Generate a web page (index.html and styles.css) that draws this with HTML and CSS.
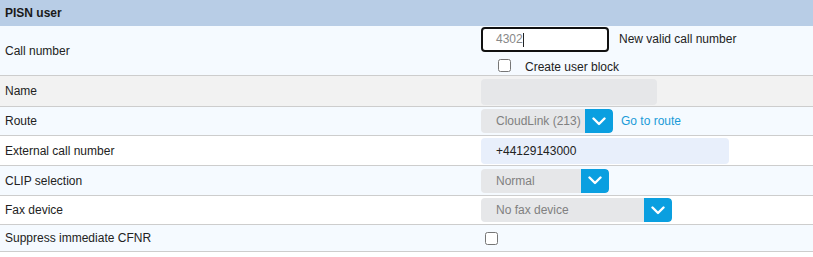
FILE: index.html
```html
<!DOCTYPE html>
<html>
<head>
<meta charset="utf-8">
<link rel="stylesheet" href="styles.css">
</head>
<body>
<div class="panel">
  <div class="header">PISN user</div>

  <div class="row tint tall">
    <div class="label">Call number</div>
    <div class="ctrl stack">
      <div class="line">
        <div class="input focused">4302<span class="caret"></span></div>
        <span class="hint">New valid call number</span>
      </div>
      <label class="check-line">
        <input type="checkbox" class="cb">
        <span>Create user block</span>
      </label>
    </div>
  </div>

  <div class="row grey">
    <div class="label">Name</div>
    <div class="ctrl"><div class="box name-box"></div></div>
  </div>

  <div class="row tint h28">
    <div class="label">Route</div>
    <div class="ctrl">
      <div class="select route-sel">
        <span class="sel-text">CloudLink (213)</span>
        <span class="sel-btn"><svg width="14" height="9" viewBox="0 0 14 9"><path d="M1.5 1.5 L7 7 L12.5 1.5" fill="none" stroke="#fff" stroke-width="2.4" stroke-linecap="round" stroke-linejoin="round"/></svg></span>
      </div>
      <a class="link">Go to route</a>
    </div>
  </div>

  <div class="row">
    <div class="label">External call number</div>
    <div class="ctrl"><div class="box ext-box">+44129143000</div></div>
  </div>

  <div class="row tint">
    <div class="label">CLIP selection</div>
    <div class="ctrl">
      <div class="select clip-sel">
        <span class="sel-text">Normal</span>
        <span class="sel-btn"><svg width="14" height="9" viewBox="0 0 14 9"><path d="M1.5 1.5 L7 7 L12.5 1.5" fill="none" stroke="#fff" stroke-width="2.4" stroke-linecap="round" stroke-linejoin="round"/></svg></span>
      </div>
    </div>
  </div>

  <div class="row h28">
    <div class="label">Fax device</div>
    <div class="ctrl">
      <div class="select fax-sel">
        <span class="sel-text">No fax device</span>
        <span class="sel-btn"><svg width="14" height="9" viewBox="0 0 14 9"><path d="M1.5 1.5 L7 7 L12.5 1.5" fill="none" stroke="#fff" stroke-width="2.4" stroke-linecap="round" stroke-linejoin="round"/></svg></span>
      </div>
    </div>
  </div>

  <div class="row tint short">
    <div class="label">Suppress immediate CFNR</div>
    <div class="ctrl"><input type="checkbox" class="cb cb-solo"></div>
  </div>
</div>
</body>
</html>
```

FILE: styles.css
```css
html, body {
  margin: 0;
  padding: 0;
  background: #ffffff;
}
body {
  font-family: "Liberation Sans", Arial, sans-serif;
  font-size: 12px;
  color: #222222;
}
.panel {
  width: 813px;
}
.header {
  height: 26px;
  line-height: 26px;
  background: #b8cde6;
  font-weight: bold;
  padding-left: 5px;
  color: #1a1a1a;
}
.row {
  display: flex;
  align-items: center;
  height: 29px;
  border-bottom: 1px solid #cdcdcd;
  background: #ffffff;
}
.row.tint { background: #f5faff; }
.row.grey { background: #f2f2f2; height: 30px; }
.row.tall { height: 49px; }
.row.h28 { height: 28px; }
.row.short { height: 26px; }
.label {
  width: 476px;
  padding-left: 5px;
  flex: none;
}
.ctrl {
  display: flex;
  align-items: center;
  flex: 1;
}
.ctrl.stack {
  flex-direction: column;
  align-items: flex-start;
  align-self: flex-start;
  padding-top: 1px;
}
.line {
  display: flex;
  align-items: center;
}
.input {
  box-sizing: border-box;
  width: 128px;
  height: 25px;
  border: 2px solid #111;
  border-radius: 4px;
  padding-left: 13px;
  line-height: 21px;
  color: #888;
  background: #fff;
  display: flex;
  align-items: center;
}
.caret {
  display: inline-block;
  width: 1px;
  height: 14px;
  background: #222;
}
.hint {
  margin-left: 10px;
  position: relative;
  top: -1px;
}
.check-line {
  display: flex;
  align-items: center;
  margin-top: 6px;
  margin-left: 17px;
}
.check-line span {
  margin-left: 14px;
  position: relative;
  top: 2px;
}
.cb {
  margin: 0;
  width: 13px;
  height: 13px;
}
.cb-solo {
  margin-left: 4px;
}
.box {
  box-sizing: border-box;
  border-radius: 4px;
  background: #e6e7e9;
}
.name-box {
  width: 176px;
  height: 26px;
  margin-top: 1px;
}
.ext-box {
  width: 248px;
  height: 26px;
  background: #e8effb;
  padding-left: 15px;
  line-height: 26px;
  color: #222;
}
.select {
  display: flex;
  height: 24px;
  border-radius: 4px;
  background: #e6e7e9;
  overflow: hidden;
}
.sel-text {
  flex: 1;
  padding-left: 15px;
  line-height: 24px;
  color: #808080;
}
.sel-btn {
  width: 28px;
  background: #0a9fe0;
  display: flex;
  align-items: center;
  justify-content: center;
  border-radius: 0 4px 4px 0;
}
.route-sel { width: 132px; }
.clip-sel { width: 128px; }
.fax-sel { width: 191px; }
.link {
  color: #1a9ad8;
  margin-left: 8px;
  cursor: pointer;
}
```
